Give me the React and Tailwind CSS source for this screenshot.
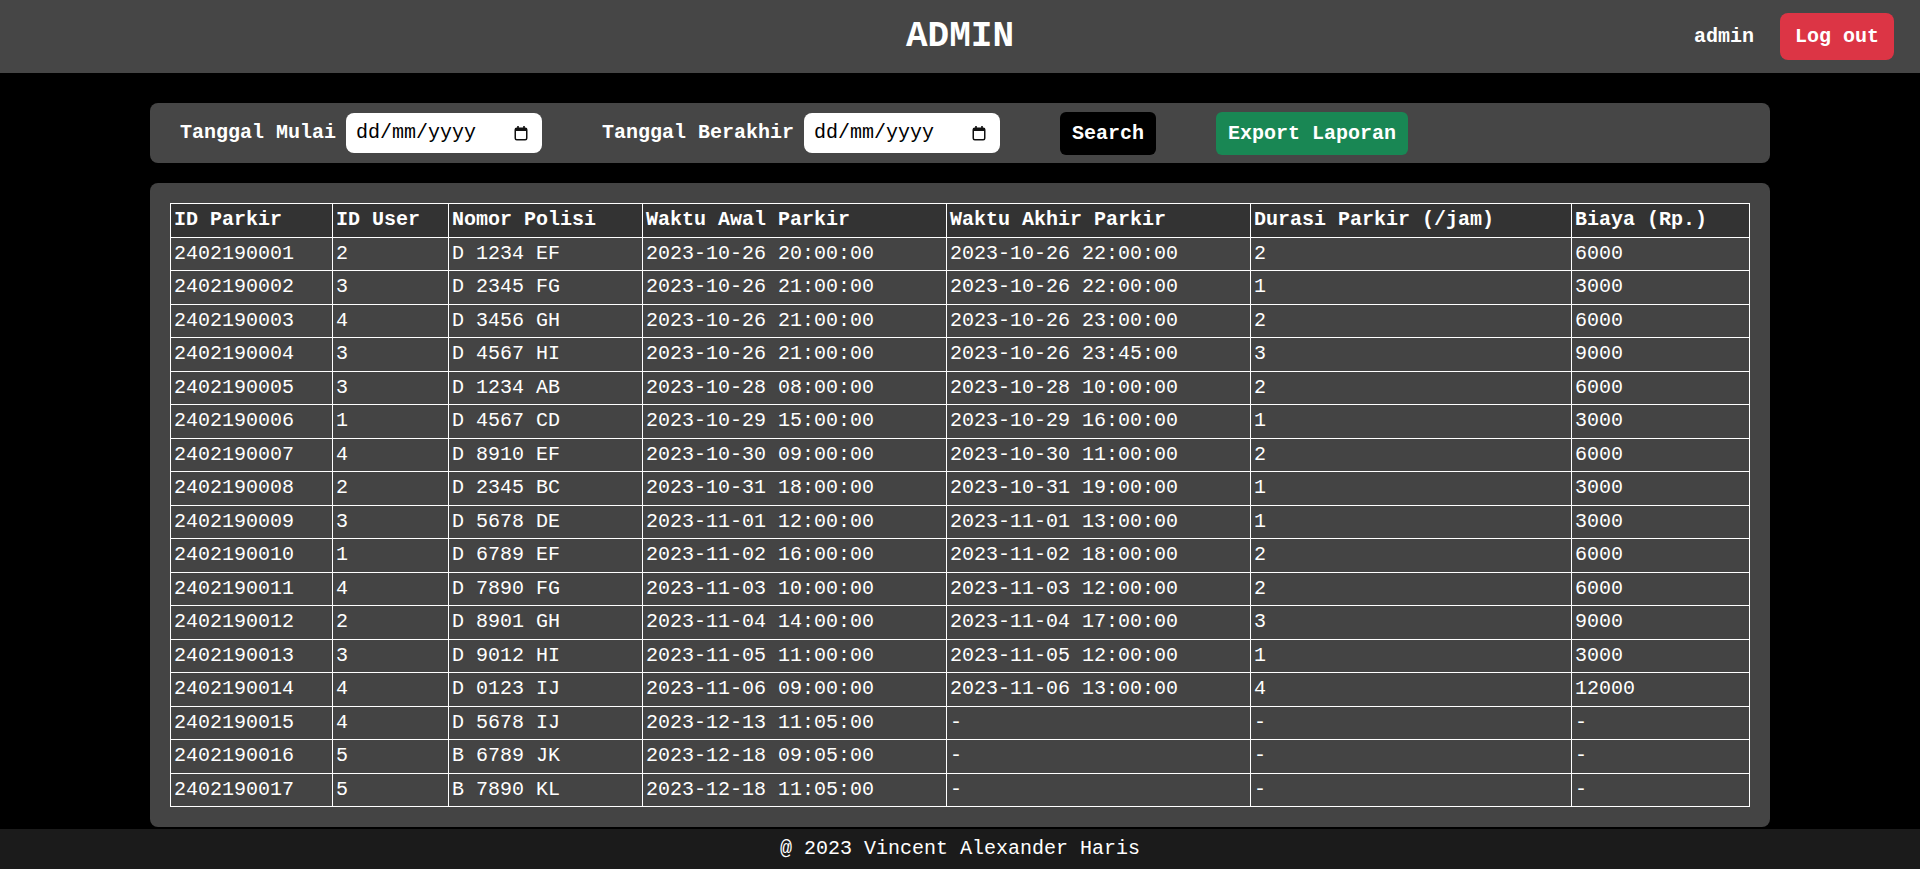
import React from 'react';

const rows = [
  ['2402190001', '2', 'D 1234 EF', '2023-10-26 20:00:00', '2023-10-26 22:00:00', '2', '6000'],
  ['2402190002', '3', 'D 2345 FG', '2023-10-26 21:00:00', '2023-10-26 22:00:00', '1', '3000'],
  ['2402190003', '4', 'D 3456 GH', '2023-10-26 21:00:00', '2023-10-26 23:00:00', '2', '6000'],
  ['2402190004', '3', 'D 4567 HI', '2023-10-26 21:00:00', '2023-10-26 23:45:00', '3', '9000'],
  ['2402190005', '3', 'D 1234 AB', '2023-10-28 08:00:00', '2023-10-28 10:00:00', '2', '6000'],
  ['2402190006', '1', 'D 4567 CD', '2023-10-29 15:00:00', '2023-10-29 16:00:00', '1', '3000'],
  ['2402190007', '4', 'D 8910 EF', '2023-10-30 09:00:00', '2023-10-30 11:00:00', '2', '6000'],
  ['2402190008', '2', 'D 2345 BC', '2023-10-31 18:00:00', '2023-10-31 19:00:00', '1', '3000'],
  ['2402190009', '3', 'D 5678 DE', '2023-11-01 12:00:00', '2023-11-01 13:00:00', '1', '3000'],
  ['2402190010', '1', 'D 6789 EF', '2023-11-02 16:00:00', '2023-11-02 18:00:00', '2', '6000'],
  ['2402190011', '4', 'D 7890 FG', '2023-11-03 10:00:00', '2023-11-03 12:00:00', '2', '6000'],
  ['2402190012', '2', 'D 8901 GH', '2023-11-04 14:00:00', '2023-11-04 17:00:00', '3', '9000'],
  ['2402190013', '3', 'D 9012 HI', '2023-11-05 11:00:00', '2023-11-05 12:00:00', '1', '3000'],
  ['2402190014', '4', 'D 0123 IJ', '2023-11-06 09:00:00', '2023-11-06 13:00:00', '4', '12000'],
  ['2402190015', '4', 'D 5678 IJ', '2023-12-13 11:05:00', '-', '-', '-'],
  ['2402190016', '5', 'B 6789 JK', '2023-12-18 09:05:00', '-', '-', '-'],
  ['2402190017', '5', 'B 7890 KL', '2023-12-18 11:05:00', '-', '-', '-'],
];

const headers = ['ID Parkir', 'ID User', 'Nomor Polisi', 'Waktu Awal Parkir', 'Waktu Akhir Parkir', 'Durasi Parkir (/jam)', 'Biaya (Rp.)'];
const widths = ['w-[162px]', 'w-[116px]', 'w-[194px]', 'w-[304px]', 'w-[304px]', 'w-[321px]', 'w-[178px]'];

const CalendarIcon = () => (
  <svg width="14" height="16" viewBox="0 0 14 16" fill="none">
    <rect x="1.25" y="3.25" width="11.5" height="11.5" rx="1.5" stroke="#111" strokeWidth="1.5" />
    <rect x="1" y="3" width="12" height="3" fill="#111" />
    <rect x="3.2" y="1" width="1.6" height="3" fill="#111" />
    <rect x="9.2" y="1" width="1.6" height="3" fill="#111" />
  </svg>
);

const DateField = () => (
  <div className="flex items-center justify-between w-[196px] h-10 bg-white rounded-lg pl-[10px] pr-[14px]">
    <span className="text-black text-[20px]">dd/mm/yyyy</span>
    <CalendarIcon />
  </div>
);

export default function App() {
  return (
    <div className="h-screen flex flex-col bg-black text-white font-['Liberation_Mono','Courier_New',monospace]">
      {/* Header */}
      <header className="h-[73px] shrink-0 bg-[#464646] grid grid-cols-[1fr_auto_1fr] items-center">
        <div />
        <h1 className="text-[36px] font-bold leading-none">ADMIN</h1>
        <div className="flex items-center justify-end gap-[26px] pr-[26px]">
          <span className="text-[20px] font-bold">admin</span>
          <button className="bg-[#dc3545] rounded-lg px-[15px] py-3 text-[20px] font-bold leading-[23px] text-white">Log out</button>
        </div>
      </header>

      <main className="flex-1 px-[150px] pt-[30px]">
        {/* Filter */}
        <div className="h-[60px] bg-[#464646] rounded-lg flex items-center pl-[30px] gap-[60px]">
          <div className="flex items-center gap-[10px]">
            <span className="text-[20px] font-bold">Tanggal Mulai</span>
            <DateField />
          </div>
          <div className="flex items-center gap-[10px]">
            <span className="text-[20px] font-bold">Tanggal Berakhir</span>
            <DateField />
          </div>
          <button className="bg-black rounded-md px-3 py-[10px] text-[20px] font-bold leading-[23px] text-white">Search</button>
          <button className="bg-[#198754] rounded-md px-3 py-[10px] text-[20px] font-bold leading-[23px] text-white">Export Laporan</button>
        </div>

        {/* Table */}
        <div className="mt-5 bg-[#444444] rounded-lg p-5">
          <table className="w-full table-fixed border-collapse text-[20px]">
            <colgroup>
              {widths.map((w, i) => (
                <col key={i} className={w} />
              ))}
            </colgroup>
            <thead>
              <tr className="bg-[#333333]">
                {headers.map((h) => (
                  <th key={h} className="border border-white px-[3px] py-[5px] leading-[22.5px] text-left font-bold whitespace-nowrap">{h}</th>
                ))}
              </tr>
            </thead>
            <tbody>
              {rows.map((r) => (
                <tr key={r[0]}>
                  {r.map((c, i) => (
                    <td key={i} className="border border-white px-[3px] py-[5px] leading-[22.5px] text-left font-normal whitespace-nowrap">{c}</td>
                  ))}
                </tr>
              ))}
            </tbody>
          </table>
        </div>
      </main>

      <footer className="h-10 shrink-0 bg-[#1b1b1b] flex items-center justify-center text-[20px]">
        @ 2023 Vincent Alexander Haris
      </footer>
    </div>
  );
}
